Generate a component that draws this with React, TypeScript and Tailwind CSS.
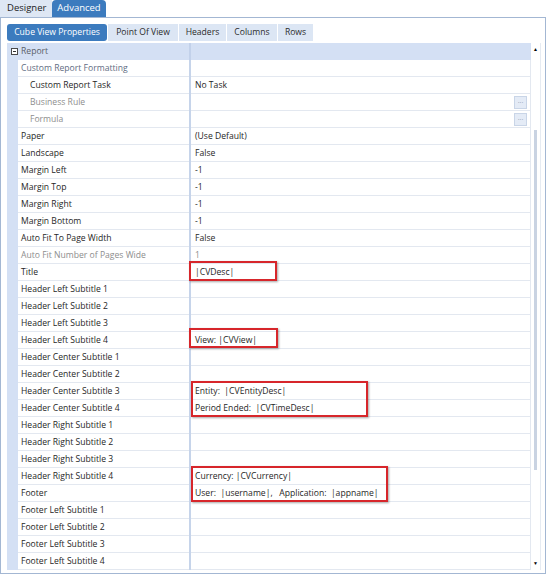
type Row = {
  label: string;
  value?: string;
  indent?: boolean;
  tone?: "normal" | "muted" | "group";
  browse?: boolean;
};

const rows: Row[] = [
  { label: "Custom Report Formatting", tone: "group" },
  { label: "Custom Report Task", value: "No Task", indent: true },
  { label: "Business Rule", indent: true, tone: "muted", browse: true },
  { label: "Formula", indent: true, tone: "muted", browse: true },
  { label: "Paper", value: "(Use Default)" },
  { label: "Landscape", value: "False" },
  { label: "Margin Left", value: "-1" },
  { label: "Margin Top", value: "-1" },
  { label: "Margin Right", value: "-1" },
  { label: "Margin Bottom", value: "-1" },
  { label: "Auto Fit To Page Width", value: "False" },
  { label: "Auto Fit Number of Pages Wide", value: "1", tone: "muted" },
  { label: "Title", value: "|CVDesc|" },
  { label: "Header Left Subtitle 1" },
  { label: "Header Left Subtitle 2" },
  { label: "Header Left Subtitle 3" },
  { label: "Header Left Subtitle 4", value: "View: |CVView|" },
  { label: "Header Center Subtitle 1" },
  { label: "Header Center Subtitle 2" },
  { label: "Header Center Subtitle 3", value: "Entity:  |CVEntityDesc|" },
  { label: "Header Center Subtitle 4", value: "Period Ended:  |CVTimeDesc|" },
  { label: "Header Right Subtitle 1" },
  { label: "Header Right Subtitle 2" },
  { label: "Header Right Subtitle 3" },
  { label: "Header Right Subtitle 4", value: "Currency: |CVCurrency|" },
  { label: "Footer", value: "User:  |username|,   Application:  |appname|" },
  { label: "Footer Left Subtitle 1" },
  { label: "Footer Left Subtitle 2" },
  { label: "Footer Left Subtitle 3" },
  { label: "Footer Left Subtitle 4" },
];

const subTabs = [
  { name: "Cube View Properties", w: "w-[100px]", active: true },
  { name: "Point Of View", w: "w-[70px]" },
  { name: "Headers", w: "w-[47px]" },
  { name: "Columns", w: "w-[50px]" },
  { name: "Rows", w: "w-[35px]" },
];

// red callouts drawn over the value column
const callouts = [
  "left-[182px] top-[218px] w-[88px] h-[20px]",
  "left-[182px] top-[285px] w-[89px] h-[20px]",
  "left-[184px] top-[338px] w-[177px] h-[36px]",
  "left-[184px] top-[423px] w-[197px] h-[36px]",
];

function PropertyRow({ row }: { row: Row }) {
  const labelColor =
    row.tone === "muted"
      ? "text-[#8d8d8d]"
      : row.tone === "group"
        ? "text-[#5f6d83]"
        : "text-[#262626]";
  return (
    <div className="flex h-[17px]">
      <div className="w-[11px] shrink-0 bg-[#d4e0f4]" />
      <div
        className={`flex w-[171px] shrink-0 items-center border-b border-[#e3e8f0] ${
          row.indent ? "pl-[12px]" : "pl-[3px]"
        } ${labelColor}`}
      >
        {row.label}
      </div>
      <div className="w-[2px] shrink-0 bg-[#c6d4ea]" />
      <div
        className={`flex flex-1 items-center justify-between border-b border-r border-[#e3e8f0] pl-[4px] pr-[3px] ${
          row.tone === "muted" ? "text-[#8d8d8d]" : "text-[#262626]"
        }`}
      >
        <span className="whitespace-pre">{row.value ?? ""}</span>
        {row.browse && (
          <span className="flex h-[13px] w-[13px] items-center justify-center border border-[#c9d5e7] bg-[#e4ebf6] text-[7px] leading-none text-[#8594ac]">
            ···
          </span>
        )}
      </div>
    </div>
  );
}

export default function App() {
  return (
    <div className="h-[576px] w-[547px] overflow-hidden bg-white font-['Open_Sans',sans-serif] text-[8.6px] text-[#262626]">
      {/* top level tabs */}
      <div className="flex h-[17px] items-end text-[9.5px]">
        <div className="flex h-[17px] w-[52px] items-center bg-[#dee7f4] pl-[7px] text-[#222]">
          Designer
        </div>
        <div className="flex h-[17px] w-[54px] items-center justify-center rounded-t-[4px] bg-[#3c7bbe] text-white">
          Advanced
        </div>
      </div>

      <div className="flex h-[557px] w-[546px] flex-col border border-[#a3b7d3] pl-[6px] pr-[4px] pt-[6px]">
        {/* property page tabs */}
        <div className="flex h-[17px] gap-[1px] text-[8.6px]">
          {subTabs.map((t) => (
            <div
              key={t.name}
              className={`flex h-[17px] items-center justify-center ${t.w} ${
                t.active
                  ? "rounded-[3px] bg-[#3c7bbe] text-white"
                  : "bg-[#dce6f4] text-[#2a2a2a]"
              }`}
            >
              {t.name}
            </div>
          ))}
        </div>

        {/* property grid */}
        <div className="relative mt-[2px] flex">
          <div className="w-[524px]">
            <div className="flex h-[17px] bg-[#d4e0f4]">
              <div className="flex w-[11px] shrink-0 items-center justify-end">
                <span className="flex h-[7px] w-[7px] items-center justify-center border border-[#4a4a4a] bg-white">
                  <span className="h-[1px] w-[3px] bg-[#333]" />
                </span>
              </div>
              <div className="flex w-[171px] shrink-0 items-center pl-[3px] text-[#5a5f68]">
                Report
              </div>
              <div className="w-[2px] shrink-0 bg-[#c2d1ea]" />
              <div className="flex-1" />
            </div>
            {rows.map((r) => (
              <PropertyRow key={r.label} row={r} />
            ))}
          </div>

          {/* vertical scrollbar */}
          <div className="flex w-[10px] flex-col items-center border-r border-[#e6ebf2]">
            <span className="mt-[4px] text-[5px] leading-none text-black">▲</span>
            <div className="mt-[78px] h-[340px] w-[3px] bg-[#c9d3e2]" />
            <div className="flex-1" />
            <span className="mb-[4px] text-[5px] leading-none text-black">▼</span>
          </div>

          {callouts.map((c) => (
            <div
              key={c}
              className={`pointer-events-none absolute border-2 border-[#d7262b] shadow-[1px_1px_2px_rgba(0,0,0,0.35)] ${c}`}
            />
          ))}
        </div>
      </div>
    </div>
  );
}
